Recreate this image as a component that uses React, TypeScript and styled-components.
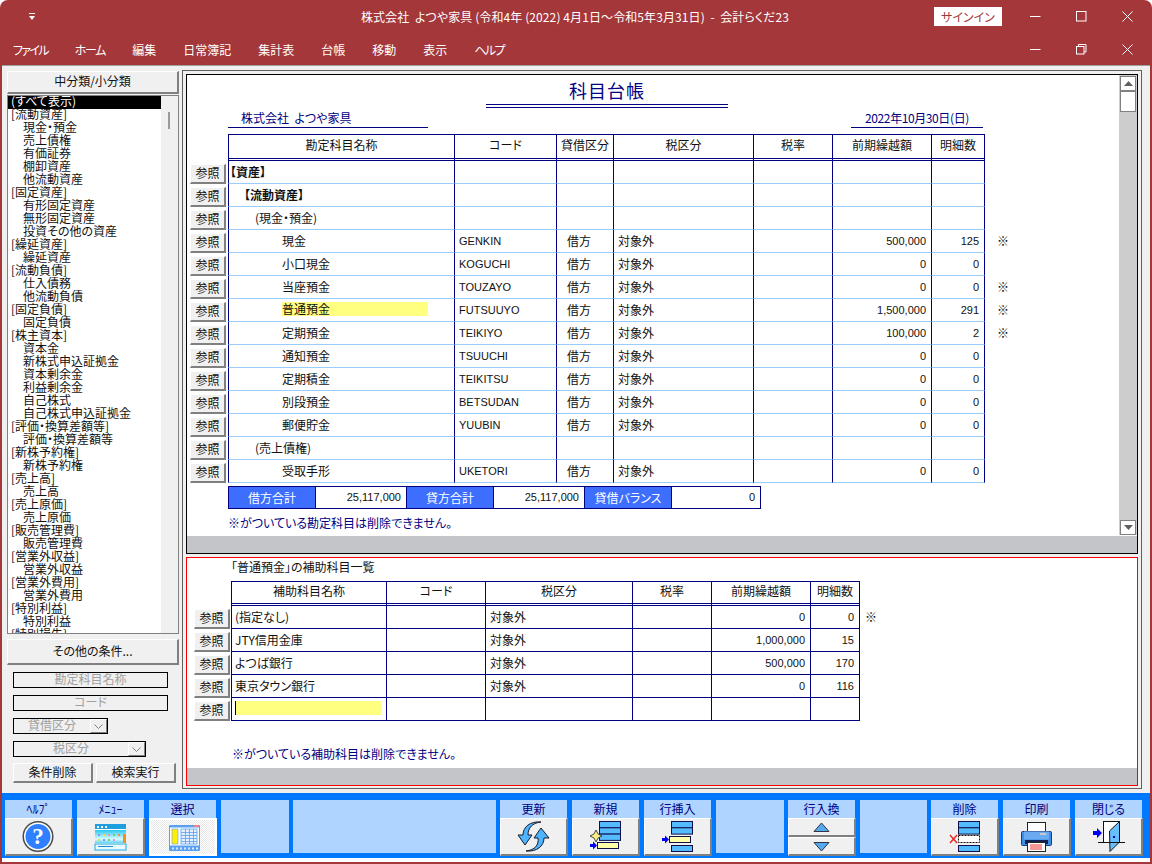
import React, { FC } from "react";
import styled, { createGlobalStyle } from "styled-components";

const NAVY = "#000080";

const GlobalStyle = createGlobalStyle`
    html, body {
        margin: 0;
        padding: 0;
        background: #ffffff;
        overflow: hidden;
    }
    body {
        font-family: "Noto Sans CJK JP", "Liberation Sans", sans-serif;
        font-size: 12px;
        font-feature-settings: "palt";
        color: #111111;
    }
    * {
        box-sizing: border-box;
    }
`;

const categories: [string, boolean][] = [
    ["[流動資産]", true], ["現金・預金", false], ["売上債権", false], ["有価証券", false], ["棚卸資産", false], ["他流動資産", false],
    ["[固定資産]", true], ["有形固定資産", false], ["無形固定資産", false], ["投資その他の資産", false],
    ["[繰延資産]", true], ["繰延資産", false],
    ["[流動負債]", true], ["仕入債務", false], ["他流動負債", false],
    ["[固定負債]", true], ["固定負債", false],
    ["[株主資本]", true], ["資本金", false], ["新株式申込証拠金", false], ["資本剰余金", false], ["利益剰余金", false], ["自己株式", false], ["自己株式申込証拠金", false],
    ["[評価・換算差額等]", true], ["評価・換算差額等", false],
    ["[新株予約権]", true], ["新株予約権", false],
    ["[売上高]", true], ["売上高", false],
    ["[売上原価]", true], ["売上原価", false],
    ["[販売管理費]", true], ["販売管理費", false],
    ["[営業外収益]", true], ["営業外収益", false],
    ["[営業外費用]", true], ["営業外費用", false],
    ["[特別利益]", true], ["特別利益", false],
    ["[特別損失]", true], ["特別損失", false],
];

const menuItems: [string, number][] = [
    ["ファイル", -1.7], ["ホーム", -1.3], ["編集", 0], ["日常簿記", 0], ["集計表", 0], ["台帳", 0], ["移動", 0], ["表示", 0], ["ヘルプ", -1.6],
];

interface AccountRow {
    name: string;
    indent: number;
    bold?: boolean;
    active?: boolean;
    code?: string;
    side?: string;
    tax?: string;
    amount?: string;
    count?: string;
    mark?: boolean;
}

const accounts: AccountRow[] = [
    { name: "【資産】", indent: 1, bold: true },
    { name: "【流動資産】", indent: 15, bold: true },
    { name: "(現金・預金)", indent: 26 },
    { name: "現金", indent: 53, code: "GENKIN", side: "借方", tax: "対象外", amount: "500,000", count: "125", mark: true },
    { name: "小口現金", indent: 53, code: "KOGUCHI", side: "借方", tax: "対象外", amount: "0", count: "0" },
    { name: "当座預金", indent: 53, code: "TOUZAYO", side: "借方", tax: "対象外", amount: "0", count: "0", mark: true },
    { name: "普通預金", indent: 53, active: true, code: "FUTSUUYO", side: "借方", tax: "対象外", amount: "1,500,000", count: "291", mark: true },
    { name: "定期預金", indent: 53, code: "TEIKIYO", side: "借方", tax: "対象外", amount: "100,000", count: "2", mark: true },
    { name: "通知預金", indent: 53, code: "TSUUCHI", side: "借方", tax: "対象外", amount: "0", count: "0" },
    { name: "定期積金", indent: 53, code: "TEIKITSU", side: "借方", tax: "対象外", amount: "0", count: "0" },
    { name: "別段預金", indent: 53, code: "BETSUDAN", side: "借方", tax: "対象外", amount: "0", count: "0" },
    { name: "郵便貯金", indent: 53, code: "YUUBIN", side: "借方", tax: "対象外", amount: "0", count: "0" },
    { name: "(売上債権)", indent: 26 },
    { name: "受取手形", indent: 53, code: "UKETORI", side: "借方", tax: "対象外", amount: "0", count: "0" },
];

const subAccounts = [
    { name: "(指定なし)", tax: "対象外", amount: "0", count: "0", mark: true },
    { name: "JTY信用金庫", tax: "対象外", amount: "1,000,000", count: "15" },
    { name: "よつば銀行", tax: "対象外", amount: "500,000", count: "170" },
    { name: "東京タウン銀行", tax: "対象外", amount: "0", count: "116" },
];

const Window = styled.div`
    width: 1152px;
    height: 864px;
    display: flex;
    flex-direction: column;
    background: #a4373a;
    border-radius: 8px 8px 0 0;
    padding: 0 2px 2px;
`;

const TitleBar = styled.div`
    height: 33px;
    display: grid;
    grid-template-columns: 1fr auto 1fr;
    align-items: center;
    color: #ffffff;
`;

const QuickAccess = styled.div`
    padding-left: 24px;
    display: flex;
`;

const WindowTitle = styled.div`
    font-size: 12px;
    white-space: pre;
    padding-right: 2px;
    letter-spacing: 0.1px;
`;

const TitleRight = styled.div`
    display: flex;
    justify-content: flex-end;
    align-items: center;
`;

const SignIn = styled.div`
    width: 68px;
    height: 19px;
    margin-right: 10px;
    margin-top: -1px;
    background: #ffffff;
    color: #a4373a;
    font-size: 12px;
    line-height: 19px;
    text-align: center;
`;

const ControlButton = styled.div`
    width: 46px;
    height: 32px;
    display: flex;
    align-items: center;
    justify-content: center;
`;

const MenuBar = styled.div`
    height: 32px;
    display: flex;
    align-items: center;
    justify-content: space-between;
    color: #ffffff;
`;

const MenuItems = styled.div`
    display: flex;
    gap: 27px;
    padding-left: 11px;
`;

const MenuItem = styled.span<{ $tight: number }>`
    letter-spacing: ${(p) => p.$tight}px;
`;

const Controls = styled.div`
    display: flex;
`;

const Main = styled.div`
    height: 728px;
    display: flex;
    background: #f0f0f0;
    border-top: 1px solid #a0a0a0;
    padding: 4px 0 0 5px;
`;

const Sidebar = styled.div`
    width: 172px;
    margin: 1px 3px 0 0;
    display: flex;
    flex-direction: column;
`;

const Bevel = styled.div`
    background: #f0f0f0;
    border-top: 1px solid #ffffff;
    border-left: 1px solid #ffffff;
    border-right: 2px solid #808080;
    border-bottom: 2px solid #808080;
    padding-bottom: 3px;
    display: flex;
    align-items: center;
    justify-content: center;
    white-space: nowrap;
`;

const SideHeader = styled(Bevel)`
    height: 23px;
    flex-shrink: 0;
`;

const ListBox = styled.div`
    height: 539px;
    margin-top: 1px;
    display: flex;
    flex-shrink: 0;
    border: 1px solid #808080;
    background: #ffffff;
    overflow: hidden;
`;

const ListItems = styled.div`
    width: 153px;
    overflow: hidden;
`;

const ListItem = styled.div<{ $selected?: boolean; $heading?: boolean }>`
    height: 13px;
    line-height: 10px;
    white-space: nowrap;
    padding-left: ${(p) => (p.$selected || p.$heading ? 3 : 15)}px;
    background: ${(p) => (p.$selected ? "#000000" : "transparent")};
    color: ${(p) => (p.$selected ? "#ffffff" : "#111111")};
`;

const ListTrack = styled.div`
    flex: 1;
    background: #f0f0f0;
    padding: 16px 0 0 7px;
`;

const ListThumb = styled.div`
    width: 2px;
    height: 17px;
    background: #9a9a9a;
`;

const MoreButton = styled(Bevel)`
    height: 26px;
    margin-top: 5px;
    flex-shrink: 0;
`;

const Filters = styled.div`
    display: flex;
    flex-direction: column;
    gap: 7px;
    padding: 7px 0 0 6px;
`;

const FilterBox = styled.div<{ $w: number }>`
    width: ${(p) => p.$w}px;
    height: 16px;
    display: flex;
    border: 1px solid #000000;
    background: #f0f0f0;
    color: #a0a0a0;
    line-height: 12px;
    text-align: center;
`;

const FilterLabel = styled.div`
    flex: 1;
`;

const DropButton = styled.div`
    width: 17px;
    display: flex;
    align-items: center;
    justify-content: center;
    background: #f0f0f0;
    border-top: 1px solid #ffffff;
    border-left: 1px solid #ffffff;
    border-right: 1px solid #808080;
    border-bottom: 1px solid #808080;
`;

const FilterActions = styled.div`
    display: flex;
    gap: 3px;
    margin-top: -1px;
`;

const FilterButton = styled(Bevel)`
    width: 80px;
    height: 20px;
`;

const Pane = styled.div`
    width: 960px;
    height: 719px;
    display: flex;
    flex-direction: column;
    gap: 3px;
    border: 1px solid #606060;
    padding: 3px 3px 2px;
`;

const LedgerPanel = styled.div`
    height: 480px;
    flex-shrink: 0;
    display: flex;
    flex-direction: column;
    background: #ffffff;
    border: 1px solid #000000;
`;

const LedgerBody = styled.div`
    flex: 1;
    display: flex;
    min-height: 0;
`;

const LedgerMain = styled.div`
    flex: 1;
    display: flex;
    flex-direction: column;
`;

const ScrollBar = styled.div`
    width: 18px;
    margin-bottom: 1px;
    display: flex;
    flex-direction: column;
    background: #cdcdcd;
    padding-top: 1px;
`;

const ScrollArrow = styled.div`
    height: 15px;
    margin: 0 1px;
    display: flex;
    align-items: center;
    justify-content: center;
    background: #ffffff;
    border: 1px solid #808080;
`;

const ScrollThumb = styled.div`
    height: 21px;
    margin: 0 1px;
    background: #ffffff;
    border: 1px solid #808080;
`;

const ScrollGap = styled.div`
    flex: 1;
`;

const GreyBar = styled.div`
    height: 17px;
    flex-shrink: 0;
    background: #c4c5c8;
`;

const ReportTitle = styled.div`
    width: 242px;
    height: 33px;
    flex-shrink: 0;
    margin-left: 299px;
    border-bottom: 4px double ${NAVY};
    color: ${NAVY};
    font-size: 18px;
    line-height: 31px;
    text-align: center;
    letter-spacing: 1px;
`;

const ReportMeta = styled.div`
    height: 20px;
    margin: 0 0 6px 41px;
    display: flex;
    justify-content: space-between;
    width: 755px;
`;

const MetaText = styled.div<{ $w: number; $center?: boolean }>`
    width: ${(p) => p.$w}px;
    border-bottom: 1px solid ${NAVY};
    color: ${NAVY};
    line-height: 19px;
    white-space: pre;
    padding-left: ${(p) => (p.$center ? 0 : 13)}px;
    text-align: ${(p) => (p.$center ? "center" : "left")};
    letter-spacing: ${(p) => (p.$center ? "-0.4px" : "0")};
`;

const Row = styled.div`
    display: flex;
`;

const ButtonColumn = styled.div<{ $w: number; $pad: number }>`
    width: ${(p) => p.$w}px;
    padding-left: ${(p) => p.$pad}px;
    flex-shrink: 0;
    display: flex;
    align-items: flex-end;
`;

const RefButton = styled(Bevel)`
    width: 36px;
    height: 20px;
`;

const HeaderCell = styled.div<{ $w: number; $end?: boolean; $h: number; $lh: number }>`
    width: ${(p) => p.$w + (p.$end ? 1 : 0)}px;
    height: ${(p) => p.$h}px;
    border-top: 1px solid ${NAVY};
    border-left: 1px solid ${NAVY};
    border-right: ${(p) => (p.$end ? `1px solid ${NAVY}` : "none")};
    border-bottom: 3px double ${NAVY};
    line-height: ${(p) => p.$lh}px;
    text-align: center;
    color: #111111;
`;

const Cell = styled.div<{ $w: number; $end?: boolean; $line: string; $right?: boolean; $pad?: number; $latin?: boolean }>`
    width: ${(p) => p.$w + (p.$end ? 1 : 0)}px;
    height: 23px;
    flex-shrink: 0;
    display: flex;
    align-items: center;
    justify-content: ${(p) => (p.$right ? "flex-end" : "flex-start")};
    padding: 0 5px ${(p) => (p.$latin ? 0 : 2)}px ${(p) => p.$pad ?? 4}px;
    border-left: 1px solid ${NAVY};
    border-right: ${(p) => (p.$end ? `1px solid ${NAVY}` : "none")};
    border-bottom: 1px solid ${(p) => p.$line};
    white-space: nowrap;
    font-family: ${(p) => (p.$latin ? '"Liberation Sans", sans-serif' : "inherit")};
    font-size: ${(p) => (p.$latin ? 11 : 12)}px;
`;

const NameText = styled.span<{ $bold?: boolean; $active?: boolean }>`
    font-weight: ${(p) => (p.$bold ? 700 : 400)};
    background: ${(p) => (p.$active ? "#ffff80" : "transparent")};
    width: ${(p) => (p.$active ? "146px" : "auto")};
    height: ${(p) => (p.$active ? "14px" : "auto")};
    line-height: ${(p) => (p.$active ? "14px" : "normal")};
`;

const Mark = styled.div<{ $left: number }>`
    padding-left: ${(p) => p.$left}px;
    height: 23px;
    line-height: 21px;
    font-size: 12px;
    font-feature-settings: normal;
`;

const Totals = styled.div`
    display: flex;
    width: 533px;
    height: 23px;
    margin: 3px 0 0 41px;
    border: 1px solid ${NAVY};
`;

const TotalLabel = styled.div<{ $w: number }>`
    width: ${(p) => p.$w}px;
    background: #3d6eff;
    color: #ffffff;
    text-align: center;
    line-height: 21px;
    border-right: 1px solid ${NAVY};
`;

const TotalValue = styled.div<{ $w: number; $end?: boolean }>`
    width: ${(p) => p.$w}px;
    padding-right: 5px;
    text-align: right;
    font-family: "Liberation Sans", sans-serif;
    font-size: 11px;
    line-height: 21px;
    border-right: ${(p) => (p.$end ? "none" : `1px solid ${NAVY}`)};
`;

const Note = styled.div<{ $left: number; $top: number }>`
    margin: ${(p) => p.$top}px 0 0 ${(p) => p.$left}px;
    color: ${NAVY};
    line-height: 17px;
`;

const SubPanel = styled.div`
    flex: 1;
    display: flex;
    flex-direction: column;
    background: #ffffff;
    border: 1px solid #ff0000;
`;

const SubCaption = styled.div`
    height: 23px;
    margin-left: 44px;
    line-height: 18px;
`;

const SubMain = styled.div`
    flex: 1;
`;

const CaretField = styled.div`
    width: 149px;
    height: 14px;
    background: #ffff80;
    border-left: 1px solid #000000;
    margin-left: -1px;
`;

const Toolbar = styled.div`
    height: 65px;
    flex-shrink: 0;
    display: flex;
    gap: 4px;
    align-items: flex-start;
    background: #0078ff;
    padding: 7px 0 0 3px;
`;

const Tool = styled.div`
    width: 68px;
    display: flex;
    flex-direction: column;
`;

const ToolLabel = styled.div`
    width: 67px;
    height: 18px;
    background: #aed4ff;
    color: ${NAVY};
    text-align: center;
    line-height: 17px;
`;

const ToolButton = styled(Bevel)<{ $selected?: boolean }>`
    height: 38px;
    padding: 0;
    background: ${(p) => (p.$selected ? "repeating-conic-gradient(#e8e8e8 0 25%, #ffffff 0 50%) 0 0 / 2px 2px" : "#f0f0f0")};
    border-top-width: ${(p) => (p.$selected ? 2 : 1)}px;
    border-left-width: ${(p) => (p.$selected ? 2 : 1)}px;
    border-right: ${(p) => (p.$selected ? "2px solid #ffffff" : "2px solid #808080")};
    border-bottom: ${(p) => (p.$selected ? "2px solid #ffffff" : "2px solid #808080")};
`;

const HalfButton = styled(Bevel)`
    height: 19px;
    padding: 0;
`;

const BlankTool = styled.div<{ $w: number }>`
    width: ${(p) => p.$w}px;
    height: 53px;
    background: #aed4ff;
`;

const FooterStrip = styled.div`
    flex: 1;
    background: #ffffff;
`;

const IconSvg = styled.svg`
    display: block;
    flex-shrink: 0;
`;

const BlueBars: FC<{ x: number; y: number; rows: number; h: number }> = ({ x, y, rows, h }) => (
    <>
        {Array.from({ length: rows }).map((_, i) => (
            <rect key={i} x={x + 0.5} y={y + i * h + 0.5} width={21} height={h} fill="#55bbff" stroke="#10104a" />
        ))}
    </>
);

const Arrow: FC<{ x: number; y: number }> = ({ x, y }) => (
    <path d={`M${x} ${y - 1.5}h3v-2.5l4 4-4 4v-2.5h-3z`} fill="#0000ee" />
);

const Glyph: FC<{ w?: number; h?: number; children: React.ReactNode }> = ({ w = 65, h = 35, children }) => (
    <IconSvg width={w} height={h} viewBox={`1 1 ${w} ${h}`}>
        {children}
    </IconSvg>
);

const HelpIcon = () => (
    <Glyph>
        <circle cx="33" cy="18.5" r="15.5" fill="#4a4a4a" />
        <circle cx="33" cy="18.5" r="14" fill="#ffffff" />
        <circle cx="33" cy="18.5" r="12.5" fill="#2f80ff" />
        <text x="33" y="26" textAnchor="middle" fontFamily="Liberation Serif, serif" fontWeight="700" fontSize="23" fill="#ffffff">?</text>
    </Glyph>
);

const MenuIcon = () => (
    <Glyph>
        <defs>
            <linearGradient id="menuBody" x1="0" y1="0" x2="0" y2="1">
                <stop offset="0" stopColor="#28c8f0" />
                <stop offset="0.7" stopColor="#d8fbff" />
                <stop offset="1" stopColor="#60d4f4" />
            </linearGradient>
        </defs>
        <rect x="18" y="6" width="31" height="26" fill="#ffffff" />
        <rect x="18" y="6" width="31" height="5" fill="#1d9fe0" />
        <rect x="20" y="8" width="2" height="2" fill="#ffffff" />
        <rect x="24" y="8" width="2" height="2" fill="#ffffff" />
        <rect x="28" y="8" width="2" height="2" fill="#ffffff" />
        <rect x="18" y="12" width="31" height="13" fill="url(#menuBody)" />
        {[21, 26, 31, 36, 41].map((x, i) => (
            <rect key={x} x={x} y="16" width="2" height="2" fill={["#7f9cf0", "#f4d44a", "#e890d0", "#70d070", "#f09050"][i]} />
        ))}
        {[21, 26, 31, 36].map((x, i) => (
            <rect key={x} x={x} y="21" width="2" height="2" fill={["#f4d44a", "#7f9cf0", "#70d070", "#e890d0"][i]} />
        ))}
        <rect x="46" y="16" width="3" height="9" fill="#f09020" />
        <rect x="18" y="26" width="31" height="6" fill="#e8fbff" stroke="#20a8e0" strokeWidth="1" />
        <rect x="21" y="28" width="15" height="1" fill="#2090d0" />
    </Glyph>
);

const SelectIcon = () => (
    <Glyph>
        <rect x="19" y="6" width="31" height="26" rx="1" fill="#5aa0f0" />
        <rect x="44" y="6" width="5" height="2" fill="#f08090" />
        <rect x="20" y="8.5" width="29" height="18" fill="#ffffff" />
        <rect x="22" y="10" width="6" height="15" fill="#ffee00" stroke="#5aa0f0" strokeWidth="0.6" />
        <rect x="31" y="10" width="16" height="15" fill="#e4f0ff" stroke="#5aa0f0" strokeWidth="0.8" />
        {[13, 16, 19, 22].map((y) => (
            <rect key={y} x="31" y={y} width="16" height="0.8" fill="#5aa0f0" />
        ))}
        {[35, 39, 43].map((x) => (
            <rect key={x} x={x} y="10" width="0.8" height="15" fill="#5aa0f0" />
        ))}
        {[22, 26, 30, 34, 38, 42, 46].map((x) => (
            <rect key={x} x={x} y="28.5" width="2" height="2" fill="#d8e8ff" />
        ))}
    </Glyph>
);

const UpdateIcon = () => (
    <Glyph>
        <path d="M41 4C32 5 28 10 28 17L32 17 25 27 18 17 23 17C23 9 30 3 41 4Z" fill="#4db4ff" stroke="#1a1a2a" strokeWidth="1" />
        <path d="M26 33C35 32 39 27 38 20L34 20 41 10 49 20 44 20C44 28 37 34 26 33Z" fill="#4db4ff" stroke="#1a1a2a" strokeWidth="1" />
    </Glyph>
);

const NewIcon = () => (
    <Glyph>
        <BlueBars x={27} y={3} rows={3} h={6.3} />
        <path d="M24 12L26 16 30 18 26 20 24 24 22 20 18 18 22 16Z" fill="#ffee88" stroke="#222222" strokeWidth="0.8" />
        <rect x="25.5" y="24.5" width="21" height="6" fill="#ffffaa" stroke="#10104a" />
        <Arrow x={18} y={27.5} />
    </Glyph>
);

const InsertIcon = () => (
    <Glyph>
        <BlueBars x={27} y={3} rows={2} h={6.3} />
        <rect x="25.5" y="18.5" width="21" height="6" fill="#ffffaa" stroke="#10104a" />
        <Arrow x={18} y={21.5} />
        <rect x="27.5" y="27.5" width="21" height="6" fill="#55bbff" stroke="#10104a" />
    </Glyph>
);

const SwapUpIcon = () => (
    <Glyph h={17}>
        <path d="M26 13.5L33.5 5 41 13.5Z" fill="#55aaee" stroke="#333344" />
    </Glyph>
);

const SwapDownIcon = () => (
    <Glyph h={17}>
        <path d="M26 5.5L33.5 14 41 5.5Z" fill="#55aaee" stroke="#333344" />
    </Glyph>
);

const DeleteIcon = () => (
    <Glyph>
        <BlueBars x={27} y={3} rows={2} h={6.3} />
        <rect x="27.5" y="17.5" width="21" height="7" fill="#ffffff" stroke="#111111" strokeDasharray="2 1" />
        <rect x="27.5" y="27.5" width="21" height="6" fill="#55bbff" stroke="#10104a" />
        <path d="M19 17L26 25M26 17L19 25" stroke="#ee2020" strokeWidth="1.4" />
    </Glyph>
);

const PrintIcon = () => (
    <Glyph>
        <rect x="24.5" y="4.5" width="18" height="9" fill="#ffffff" stroke="#222222" />
        <rect x="18.5" y="13.5" width="30" height="14" rx="1" fill="#3e8ee8" stroke="#1c3c78" />
        <rect x="21" y="13.5" width="25" height="8" fill="#6aaaf0" />
        <rect x="37" y="15" width="6" height="2" fill="#c8c8c8" />
        <rect x="22" y="22" width="23" height="4" fill="#102050" />
        <rect x="24.5" y="24.5" width="18" height="9" fill="#ffffff" stroke="#222222" />
        {[26.5, 28.5, 30.5].map((y) => (
            <rect key={y} x="27" y={y} width="12" height="1" fill="#ee3030" />
        ))}
    </Glyph>
);

const CloseIcon = () => (
    <Glyph>
        <path d="M18 13h4v-3l5 5-5 5v-3h-4z" fill="#0000ee" />
        <rect x="28.5" y="3.5" width="16" height="21" fill="#ffffff" stroke="#111111" />
        <path d="M44.5 3.5L44.5 24 35 33.5 34.5 13Z" fill="#66c0ff" stroke="#111111" />
        <rect x="38" y="18" width="2" height="2" fill="#0000cc" />
        <path d="M23 24.5H50" stroke="#111111" />
    </Glyph>
);

const ChevronDown = () => (
    <IconSvg width="9" height="5" viewBox="0 0 9 5">
        <path d="M0.5 0.5L4.5 4.5 8.5 0.5" fill="none" stroke="#808080" />
    </IconSvg>
);

const WinIcon: FC<{ kind: "min" | "max" | "restore" | "close" }> = ({ kind }) => (
    <IconSvg width="11" height="11" viewBox="0 0 11 11" fill="none" stroke="#ffffff">
        {kind === "min" && <path d="M0 5.5H10.5" />}
        {kind === "max" && <rect x="0.5" y="0.5" width="9.5" height="9.5" />}
        {kind === "restore" && (
            <>
                <rect x="0.5" y="2.5" width="7.5" height="7.5" />
                <path d="M2.5 2.5V0.5H10V8H8" />
            </>
        )}
        {kind === "close" && <path d="M0.5 0.5L10.5 10.5M10.5 0.5L0.5 10.5" />}
    </IconSvg>
);

const ledgerColumns = [226, 102, 57, 140, 79, 99, 53];
const ledgerHeads = ["勘定科目名称", "コード", "貸借区分", "税区分", "税率", "前期繰越額", "明細数"];
const subColumns = [155, 99, 147, 79, 99, 49];
const subHeads = ["補助科目名称", "コード", "税区分", "税率", "前期繰越額", "明細数"];
const LIGHT_LINE = "#99ccff";

const FilterSidebar: FC = () => (
    <Sidebar>
        <SideHeader>中分類/小分類</SideHeader>
        <ListBox>
            <ListItems>
                <ListItem $selected>(すべて表示)</ListItem>
                {categories.map(([label, heading], i) => (
                    <ListItem key={i} $heading={heading}>{label}</ListItem>
                ))}
            </ListItems>
            <ListTrack>
                <ListThumb />
            </ListTrack>
        </ListBox>
        <MoreButton>その他の条件...</MoreButton>
        <Filters>
            <FilterBox $w={155}><FilterLabel>勘定科目名称</FilterLabel></FilterBox>
            <FilterBox $w={155}><FilterLabel>コード</FilterLabel></FilterBox>
            <FilterBox $w={95}>
                <FilterLabel>貸借区分</FilterLabel>
                <DropButton><ChevronDown /></DropButton>
            </FilterBox>
            <FilterBox $w={133}>
                <FilterLabel>税区分</FilterLabel>
                <DropButton><ChevronDown /></DropButton>
            </FilterBox>
            <FilterActions>
                <FilterButton>条件削除</FilterButton>
                <FilterButton>検索実行</FilterButton>
            </FilterActions>
        </Filters>
    </Sidebar>
);

const Ledger: FC = () => (
    <LedgerPanel>
        <LedgerBody>
            <LedgerMain>
                <ReportTitle>科目台帳</ReportTitle>
                <ReportMeta>
                    <MetaText $w={200}>株式会社  よつや家具</MetaText>
                    <MetaText $w={132} $center>2022年10月30日(日)</MetaText>
                </ReportMeta>
                <Row>
                    <ButtonColumn $w={41} $pad={3} />
                    {ledgerHeads.map((head, i) => (
                        <HeaderCell key={head} $h={27} $lh={20} $w={ledgerColumns[i]} $end={i === 6}>{head}</HeaderCell>
                    ))}
                </Row>
                {accounts.map((row) => (
                    <Row key={row.name}>
                        <ButtonColumn $w={41} $pad={3}><RefButton>参照</RefButton></ButtonColumn>
                        <Cell $w={226} $line={LIGHT_LINE} $pad={row.indent}>
                            <NameText $bold={row.bold} $active={row.active}>{row.name}</NameText>
                        </Cell>
                        <Cell $w={102} $line={LIGHT_LINE} $latin>{row.code}</Cell>
                        <Cell $w={57} $line={LIGHT_LINE} $pad={10}>{row.side}</Cell>
                        <Cell $w={140} $line={LIGHT_LINE}>{row.tax}</Cell>
                        <Cell $w={79} $line={LIGHT_LINE} />
                        <Cell $w={99} $line={LIGHT_LINE} $right $latin>{row.amount}</Cell>
                        <Cell $w={53} $end $line={LIGHT_LINE} $right $latin>{row.count}</Cell>
                        {row.mark && <Mark $left={12}>※</Mark>}
                    </Row>
                ))}
                <Totals>
                    <TotalLabel $w={87}>借方合計</TotalLabel>
                    <TotalValue $w={91}>25,117,000</TotalValue>
                    <TotalLabel $w={87}>貸方合計</TotalLabel>
                    <TotalValue $w={91}>25,117,000</TotalValue>
                    <TotalLabel $w={87}>貸借バランス</TotalLabel>
                    <TotalValue $w={88} $end>0</TotalValue>
                </Totals>
                <Note $left={41} $top={5}>※がついている勘定科目は削除できません。</Note>
            </LedgerMain>
            <ScrollBar>
                <ScrollArrow>
                    <IconSvg width="9" height="5" viewBox="0 0 9 5"><path d="M0 5L4.5 0 9 5Z" fill="#606060" /></IconSvg>
                </ScrollArrow>
                <ScrollThumb />
                <ScrollGap />
                <ScrollArrow>
                    <IconSvg width="9" height="5" viewBox="0 0 9 5"><path d="M0 0L4.5 5 9 0Z" fill="#606060" /></IconSvg>
                </ScrollArrow>
            </ScrollBar>
        </LedgerBody>
        <GreyBar />
    </LedgerPanel>
);

const SubLedger: FC = () => (
    <SubPanel>
        <SubMain>
            <SubCaption>「普通預金」の補助科目一覧</SubCaption>
            <Row>
                <ButtonColumn $w={44} $pad={7} />
                {subHeads.map((head, i) => (
                    <HeaderCell key={head} $h={25} $lh={17} $w={subColumns[i]} $end={i === 5}>{head}</HeaderCell>
                ))}
            </Row>
            {subAccounts.map((row) => (
                <Row key={row.name}>
                    <ButtonColumn $w={44} $pad={7}><RefButton>参照</RefButton></ButtonColumn>
                    <Cell $w={155} $line={NAVY} $pad={3}>{row.name}</Cell>
                    <Cell $w={99} $line={NAVY} />
                    <Cell $w={147} $line={NAVY}>{row.tax}</Cell>
                    <Cell $w={79} $line={NAVY} />
                    <Cell $w={99} $line={NAVY} $right $latin>{row.amount}</Cell>
                    <Cell $w={49} $end $line={NAVY} $right $latin>{row.count}</Cell>
                    {row.mark && <Mark $left={5}>※</Mark>}
                </Row>
            ))}
            <Row>
                <ButtonColumn $w={44} $pad={7}><RefButton>参照</RefButton></ButtonColumn>
                <Cell $w={155} $line={NAVY} $pad={4}><CaretField /></Cell>
                <Cell $w={99} $line={NAVY} />
                <Cell $w={147} $line={NAVY} />
                <Cell $w={79} $line={NAVY} />
                <Cell $w={99} $line={NAVY} />
                <Cell $w={49} $end $line={NAVY} />
            </Row>
            <Note $left={45} $top={24}>※がついている補助科目は削除できません。</Note>
        </SubMain>
        <GreyBar />
    </SubPanel>
);

const Tools: FC = () => (
    <Toolbar>
        <Tool><ToolLabel>ﾍﾙﾌﾟ</ToolLabel><ToolButton><HelpIcon /></ToolButton></Tool>
        <Tool><ToolLabel>ﾒﾆｭｰ</ToolLabel><ToolButton><MenuIcon /></ToolButton></Tool>
        <Tool><ToolLabel>選択</ToolLabel><ToolButton $selected><SelectIcon /></ToolButton></Tool>
        <BlankTool $w={68} />
        <BlankTool $w={203} />
        <Tool><ToolLabel>更新</ToolLabel><ToolButton><UpdateIcon /></ToolButton></Tool>
        <Tool><ToolLabel>新規</ToolLabel><ToolButton><NewIcon /></ToolButton></Tool>
        <Tool><ToolLabel>行挿入</ToolLabel><ToolButton><InsertIcon /></ToolButton></Tool>
        <BlankTool $w={68} />
        <Tool>
            <ToolLabel>行入換</ToolLabel>
            <HalfButton><SwapUpIcon /></HalfButton>
            <HalfButton><SwapDownIcon /></HalfButton>
        </Tool>
        <BlankTool $w={67} />
        <Tool><ToolLabel>削除</ToolLabel><ToolButton><DeleteIcon /></ToolButton></Tool>
        <Tool><ToolLabel>印刷</ToolLabel><ToolButton><PrintIcon /></ToolButton></Tool>
        <Tool><ToolLabel>閉じる</ToolLabel><ToolButton><CloseIcon /></ToolButton></Tool>
    </Toolbar>
);

export default function App() {
    return (
        <>
            <GlobalStyle />
            <Window>
                <TitleBar>
                    <QuickAccess>
                        <IconSvg width="12" height="8" viewBox="0 0 12 8">
                            <path d="M3 0.5H9" stroke="#ffffff" />
                            <path d="M3 3H9L6 7Z" fill="#ffffff" />
                        </IconSvg>
                    </QuickAccess>
                    <WindowTitle>株式会社  よつや家具 (令和4年 (2022) 4月1日～令和5年3月31日)  -  会計らくだ23</WindowTitle>
                    <TitleRight>
                        <SignIn>サインイン</SignIn>
                        <ControlButton><WinIcon kind="min" /></ControlButton>
                        <ControlButton><WinIcon kind="max" /></ControlButton>
                        <ControlButton><WinIcon kind="close" /></ControlButton>
                    </TitleRight>
                </TitleBar>
                <MenuBar>
                    <MenuItems>
                        {menuItems.map(([item, tight]) => (
                            <MenuItem key={item} $tight={tight}>{item}</MenuItem>
                        ))}
                    </MenuItems>
                    <Controls>
                        <ControlButton><WinIcon kind="min" /></ControlButton>
                        <ControlButton><WinIcon kind="restore" /></ControlButton>
                        <ControlButton><WinIcon kind="close" /></ControlButton>
                    </Controls>
                </MenuBar>
                <Main>
                    <FilterSidebar />
                    <Pane>
                        <Ledger />
                        <SubLedger />
                    </Pane>
                </Main>
                <Tools />
                <FooterStrip />
            </Window>
        </>
    );
}
